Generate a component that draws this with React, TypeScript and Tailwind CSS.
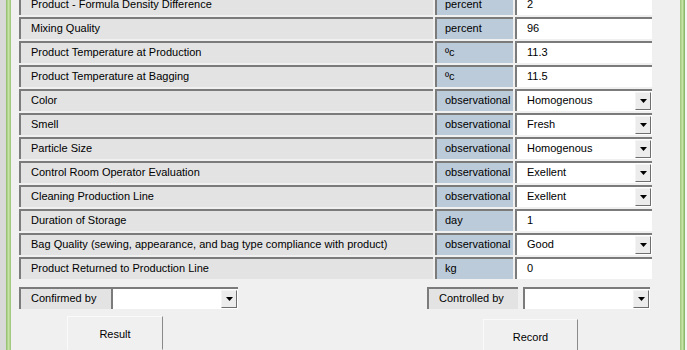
import { ReactNode } from 'react';

type Row = {
  label: string;
  unit: string;
  value: string;
  dropdown?: boolean;
};

const rows: Row[] = [
  { label: 'Product - Formula Density Difference', unit: 'percent', value: '2' },
  { label: 'Mixing Quality', unit: 'percent', value: '96' },
  { label: 'Product Temperature at Production', unit: 'ºc', value: '11.3' },
  { label: 'Product Temperature at Bagging', unit: 'ºc', value: '11.5' },
  { label: 'Color', unit: 'observational', value: 'Homogenous', dropdown: true },
  { label: 'Smell', unit: 'observational', value: 'Fresh', dropdown: true },
  { label: 'Particle Size', unit: 'observational', value: 'Homogenous', dropdown: true },
  { label: 'Control Room Operator Evaluation', unit: 'observational', value: 'Exellent', dropdown: true },
  { label: 'Cleaning Production Line', unit: 'observational', value: 'Exellent', dropdown: true },
  { label: 'Duration of Storage', unit: 'day', value: '1' },
  {
    label: 'Bag Quality (sewing, appearance, and bag type compliance with product)',
    unit: 'observational',
    value: 'Good',
    dropdown: true,
  },
  { label: 'Product Returned to Production Line', unit: 'kg', value: '0' },
];

const sunken = 'border-t-2 border-l-2 border-t-[#7b7b7b] border-l-[#7b7b7b]';

const DropArrow = () => (
  <div className="ml-auto mr-[1px] flex h-[18px] w-[16px] items-center justify-center self-center border border-t-[#f4f4f4] border-l-[#f4f4f4] border-r-[#6e6e6e] border-b-[#6e6e6e] bg-[#ececec]">
    <svg width="7" height="4" viewBox="0 0 7 4">
      <path d="M0 0h7L3.5 4z" fill="#000" />
    </svg>
  </div>
);

const Cell = ({ className, children }: { className: string; children?: ReactNode }) => (
  <div className={`flex h-[22px] items-center pb-[1px] ${sunken} ${className}`}>{children}</div>
);

const Button = ({ label, className }: { label: string; className: string }) => (
  <div
    className={`flex h-[34px] items-start justify-center border border-t-[#fafafa] border-l-[#fafafa] border-r-[#8a8a8a] border-b-transparent bg-[#f0f0f0] pt-[9px] ${className}`}
  >
    {label}
  </div>
);

export default function App() {
  return (
    <div
      className="flex h-[350px] w-[687px] overflow-hidden bg-[#f0f0f0] text-[11px] text-black"
      style={{ fontFamily: '"Liberation Sans", Arial, sans-serif' }}
    >
      <div className="w-[6px] bg-[#d9d9d9]" />
      <div className="w-[5px] bg-gradient-to-r from-[#8fba68] via-[#c7e3a6] to-[#9cc378]" />

      <div className="flex w-[669px] flex-col">
        <div className="-mt-[7px] flex flex-col gap-[2px] pl-[8px]">
          {rows.map((row) => (
            <div key={row.label} className="flex gap-[2px]">
              <Cell className="w-[414px] bg-[#e3e3e3] pl-[10px]">{row.label}</Cell>
              <Cell className="w-[78px] bg-[#bccbd9] pl-[8px]">{row.unit}</Cell>
              <Cell className="w-[137px] bg-white pl-[10px]">
                <span>{row.value}</span>
                {row.dropdown && <DropArrow />}
              </Cell>
            </div>
          ))}
        </div>

        <div className="mt-[8px] flex pl-[8px]">
          <Cell className="w-[92px] bg-[#e3e3e3] pl-[10px]">Confirmed by</Cell>
          <Cell className="w-[127px] bg-white">
            <DropArrow />
          </Cell>
          <div className="ml-[189px] flex">
            <Cell className="w-[91px] bg-[#e3e3e3] pl-[10px]">Controlled by</Cell>
            <Cell className="ml-[5px] w-[127px] bg-white">
              <DropArrow />
            </Cell>
          </div>
        </div>

        <div className="flex pl-[56px]">
          <Button label="Result" className="mt-[7px] w-[96px]" />
          <Button label="Record" className="ml-[320px] mt-[10px] w-[95px]" />
        </div>
      </div>

      <div className="w-[5px] bg-gradient-to-r from-[#9cc378] via-[#c7e3a6] to-[#7fae58]" />
      <div className="w-[2px] bg-[#f4f4f4]" />
    </div>
  );
}
